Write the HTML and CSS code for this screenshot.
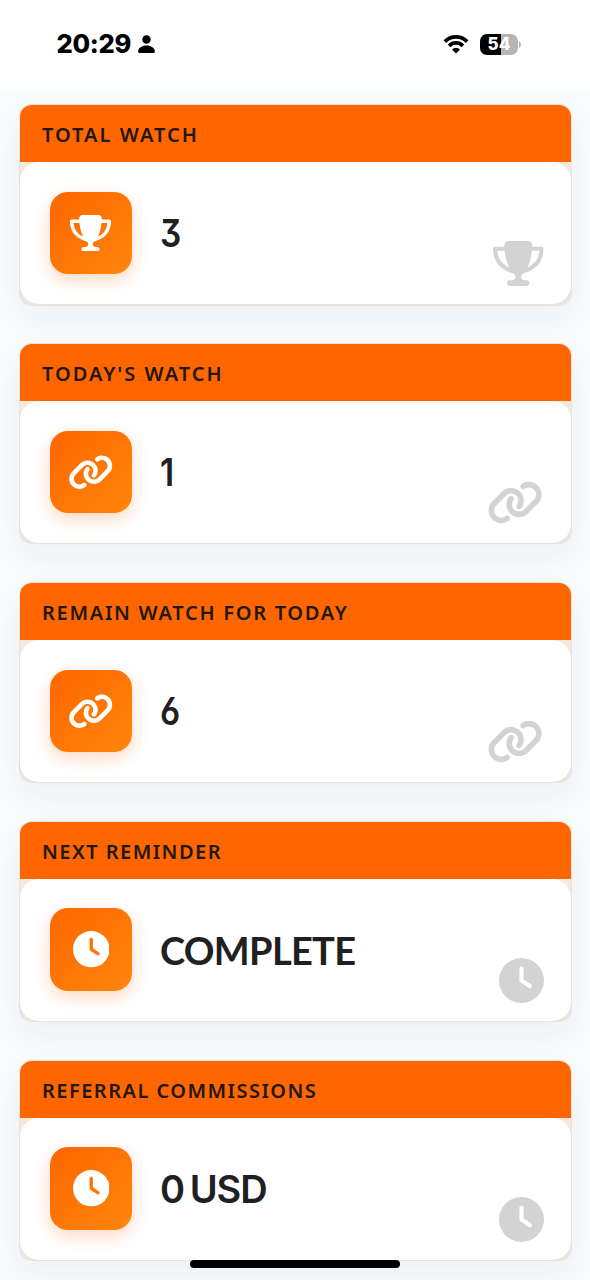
FILE: index.html
```html
<!DOCTYPE html>
<html lang="en">
<head>
<meta charset="utf-8">
<meta name="viewport" content="width=device-width">
<title>Watch statistics</title>
<link rel="stylesheet" href="styles.css">
</head>
<body>
<svg class="sprite" aria-hidden="true">
<symbol id="trophy" viewBox="0 0 576 512"><path d="M400 0H176c-26.5 0-48.1 21.8-47.1 48.2c.2 5.3 .4 10.6 .7 15.8H24C10.7 64 0 74.7 0 88c0 92.6 33.5 157 78.5 200.7c44.3 43.1 98.3 64.8 138.1 75.8c23.4 6.5 39.4 26 39.4 45.6c0 20.9-17 37.9-37.9 37.9H192c-17.7 0-32 14.3-32 32s14.3 32 32 32H384c17.7 0 32-14.3 32-32s-14.3-32-32-32H357.9C337 448 320 431 320 410.1c0-19.6 15.9-39.2 39.4-45.6c39.9-11 93.9-32.7 138.2-75.8C542.5 245 576 180.6 576 88c0-13.3-10.7-24-24-24H446.4c.3-5.2 .5-10.4 .7-15.8C448.1 21.8 426.5 0 400 0zM48.9 112h84.4c9.1 90.1 29.2 150.3 51.9 190.6c-24.9-11-50.8-26.5-73.2-48.3c-32-31.1-58-76-63-142.3zM464.1 254.3c-22.4 21.8-48.3 37.3-73.2 48.3c22.7-40.3 42.8-100.5 51.9-190.6h84.4c-5.1 66.3-31.1 111.2-63 142.3z"/></symbol>
<symbol id="link" viewBox="0 0 640 512"><path d="M579.8 267.7c56.5-56.5 56.5-148 0-204.5c-50-50-128.8-56.5-186.3-15.4l-1.6 1.1c-14.4 10.3-17.7 30.3-7.4 44.6s30.3 17.7 44.6 7.4l1.6-1.1c32.1-22.9 76-19.3 103.8 8.6c31.5 31.5 31.5 82.5 0 114L422.3 334.8c-31.5 31.5-82.5 31.5-114 0c-27.9-27.9-31.5-71.8-8.6-103.8l1.1-1.6c10.3-14.4 6.9-34.4-7.4-44.6s-34.4-6.9-44.6 7.4l-1.1 1.6C206.5 251.2 213 330 263 380c56.5 56.5 148 56.5 204.5 0L579.8 267.7zM60.2 244.3c-56.5 56.5-56.5 148 0 204.5c50 50 128.8 56.5 186.3 15.4l1.6-1.1c14.4-10.3 17.7-30.3 7.4-44.6s-30.3-17.7-44.6-7.4l-1.6 1.1c-32.1 22.9-76 19.3-103.8-8.6C74 372 74 321 105.5 289.5L217.7 177.2c31.5-31.5 82.5-31.5 114 0c27.9 27.9 31.5 71.8 8.6 103.9l-1.1 1.6c-10.3 14.4-6.9 34.4 7.4 44.6s34.4 6.9 44.6-7.4l1.1-1.6C433.5 260.8 427 182 377 132c-56.5-56.5-148-56.5-204.5 0L60.2 244.3z"/></symbol>
<symbol id="clock" viewBox="0 0 512 512"><path d="M256 0a256 256 0 1 1 0 512A256 256 0 1 1 256 0zM232 120V256c0 8 4 15.5 10.7 20l96 64c11 7.4 25.9 4.4 33.3-6.7s4.4-25.9-6.7-33.3L280 243.2V120c0-13.3-10.7-24-24-24s-24 10.7-24 24z"/></symbol>
</svg>
<header class="status">
  <div class="status-left">
    <span class="time">20:29</span>
    <svg class="person" viewBox="0 0 17 18"><circle cx="8.5" cy="4.5" r="4.2"/><path d="M.2 16.4C.2 13 3.8 10.6 8.5 10.6s8.3 2.4 8.3 5.8c0 1-.7 1.6-1.7 1.6H1.900c-1 0-1.700-.6-1.700-1.600z"/></svg>
  </div>
  <div class="status-right">
    <svg class="wifi" viewBox="0 0 26 20"><path class="arc" d="M1.900 7.600a15.500 15.500 0 0 1 22.200 0M6.100 11.900a9.600 9.600 0 0 1 13.800 0"/><path d="M13 19.400 9 15.500a5.700 5.700 0 0 1 8 0z"/></svg>
    <div class="battery"><span class="battery-level">54</span><svg class="battery-tip" viewBox="0 0 2 7"><path d="M0 0q2 1 2 3.500T0 7z"/></svg></div>
  </div>
</header>
<main class="cards">
  <section class="card">
    <h2 class="card-title">TOTAL WATCH</h2>
    <div class="card-body"><div class="tile"><svg class="icon trophy"><use href="#trophy"/></svg></div><span class="value digit">3</span><svg class="ghost trophy"><use href="#trophy"/></svg></div>
  </section>
  <section class="card">
    <h2 class="card-title">TODAY'S WATCH</h2>
    <div class="card-body"><div class="tile"><svg class="icon link"><use href="#link"/></svg></div><span class="value digit">1</span><svg class="ghost link"><use href="#link"/></svg></div>
  </section>
  <section class="card">
    <h2 class="card-title snug">REMAIN WATCH FOR TODAY</h2>
    <div class="card-body"><div class="tile"><svg class="icon link"><use href="#link"/></svg></div><span class="value digit">6</span><svg class="ghost link"><use href="#link"/></svg></div>
  </section>
  <section class="card">
    <h2 class="card-title tight">NEXT REMINDER</h2>
    <div class="card-body"><div class="tile"><svg class="icon clock"><use href="#clock"/></svg></div><span class="value word">COMPLETE</span><svg class="ghost clock"><use href="#clock"/></svg></div>
  </section>
  <section class="card">
    <h2 class="card-title tight">REFERRAL COMMISSIONS</h2>
    <div class="card-body"><div class="tile"><svg class="icon clock"><use href="#clock"/></svg></div><span class="value amount">0 USD</span><svg class="ghost clock"><use href="#clock"/></svg></div>
  </section>
</main>
<div class="home-indicator"></div>
</body>
</html>
```
FILE: styles.css
```css
* { box-sizing: border-box; }
html, body { height: 1280px; overflow: hidden; }
body {
  margin: 0;
  background: #f9fbfd;
  color: #202022;
  font-family: Inter, "Liberation Sans", sans-serif;
}
.sprite { position: absolute; width: 0; height: 0; }
.status {
  position: relative;
  z-index: 1;
  display: flex;
  justify-content: space-between;
  height: 89px;
  padding: 0 69px 0 56.500px;
  background: #fff;
  color: #000;
}
.status-left, .status-right { display: flex; align-items: center; height: 88px; }
.time { font-size: 25.5px; font-weight: 800; letter-spacing: -0.3px; line-height: 30px; }
.person { width: 17px; height: 18px; margin-left: 7px; }
.wifi { width: 26px; height: 20px; margin-right: 11px; }
.wifi .arc { fill: none; stroke: #000; stroke-width: 3.7; }
.battery { display: flex; align-items: center; gap: 1px; }
.battery-level {
  width: 38px;
  height: 21px;
  border-radius: 7px;
  background: linear-gradient(90deg, #000 54%, #b5b5b5 54%);
  color: #fff;
  font-size: 17px;
  font-weight: 800;
  line-height: 21px;
  text-align: center;
}
.battery-tip { width: 2px; height: 7px; fill: #b5b5b5; }
.cards {
  display: flex;
  flex-direction: column;
  gap: 37.400px;
  padding: 15px 18.500px 0 18.500px;
}
.card {
  flex: none;
  height: 201.500px;
  border: 1px solid #e5e3e1;
  border-top-color: #f4dfd0;
  border-radius: 13px;
  background: linear-gradient(#fcead9, #eee3db);
  box-shadow: 0 12px 32px rgba(45, 55, 65, .055);
  overflow: hidden;
}
.card-title {
  height: 57px;
  margin: 0;
  padding-left: 22.500px;
  background: #ff6600;
  color: #211812;
  font: 600 20px/59px "Noto Sans", "Open Sans", sans-serif;
  letter-spacing: 2px;
  white-space: nowrap;
}
.card-title.snug { letter-spacing: 1.720px; }
.card-title.tight { letter-spacing: 1.470px; }
.card-body {
  position: relative;
  display: flex;
  align-items: center;
  height: 142px;
  padding-left: 30px;
  border-radius: 19px;
  background: #fff;
}
.tile {
  display: flex;
  align-items: center;
  justify-content: center;
  width: 82.500px;
  height: 82.500px;
  border-radius: 18px;
  background: linear-gradient(135deg, #ff6600, #ff860b);
  box-shadow: 0 6px 17px rgba(255, 102, 0, .25);
}
.icon { height: 36.500px; fill: #fff; }
.icon.trophy { width: 41px; }
.icon.link { width: 45.500px; }
.icon.clock { width: 36.500px; }
.value {
  margin-left: 28px;
  font-size: 38px;
  font-weight: 600;
  line-height: 48px;
  font-feature-settings: "cv03", "cv09";
  white-space: nowrap;
}
.digit { transform: scaleX(.88); transform-origin: left; }
.word { font-family: Lato, sans-serif; font-weight: 700; font-size: 38px; letter-spacing: -0.7px; }
.amount { letter-spacing: -1px; word-spacing: -3px; }
.ghost { position: absolute; right: 27px; bottom: 18px; height: 45px; fill: #d3d3d3; }
.ghost.trophy { width: 50.600px; }
.ghost.link { width: 56.250px; right: 27.500px; }
.ghost.clock { width: 45px; }
.home-indicator {
  position: fixed;
  left: 190px;
  bottom: 12px;
  width: 210px;
  height: 8px;
  border-radius: 4px;
  background: #000;
}
```
